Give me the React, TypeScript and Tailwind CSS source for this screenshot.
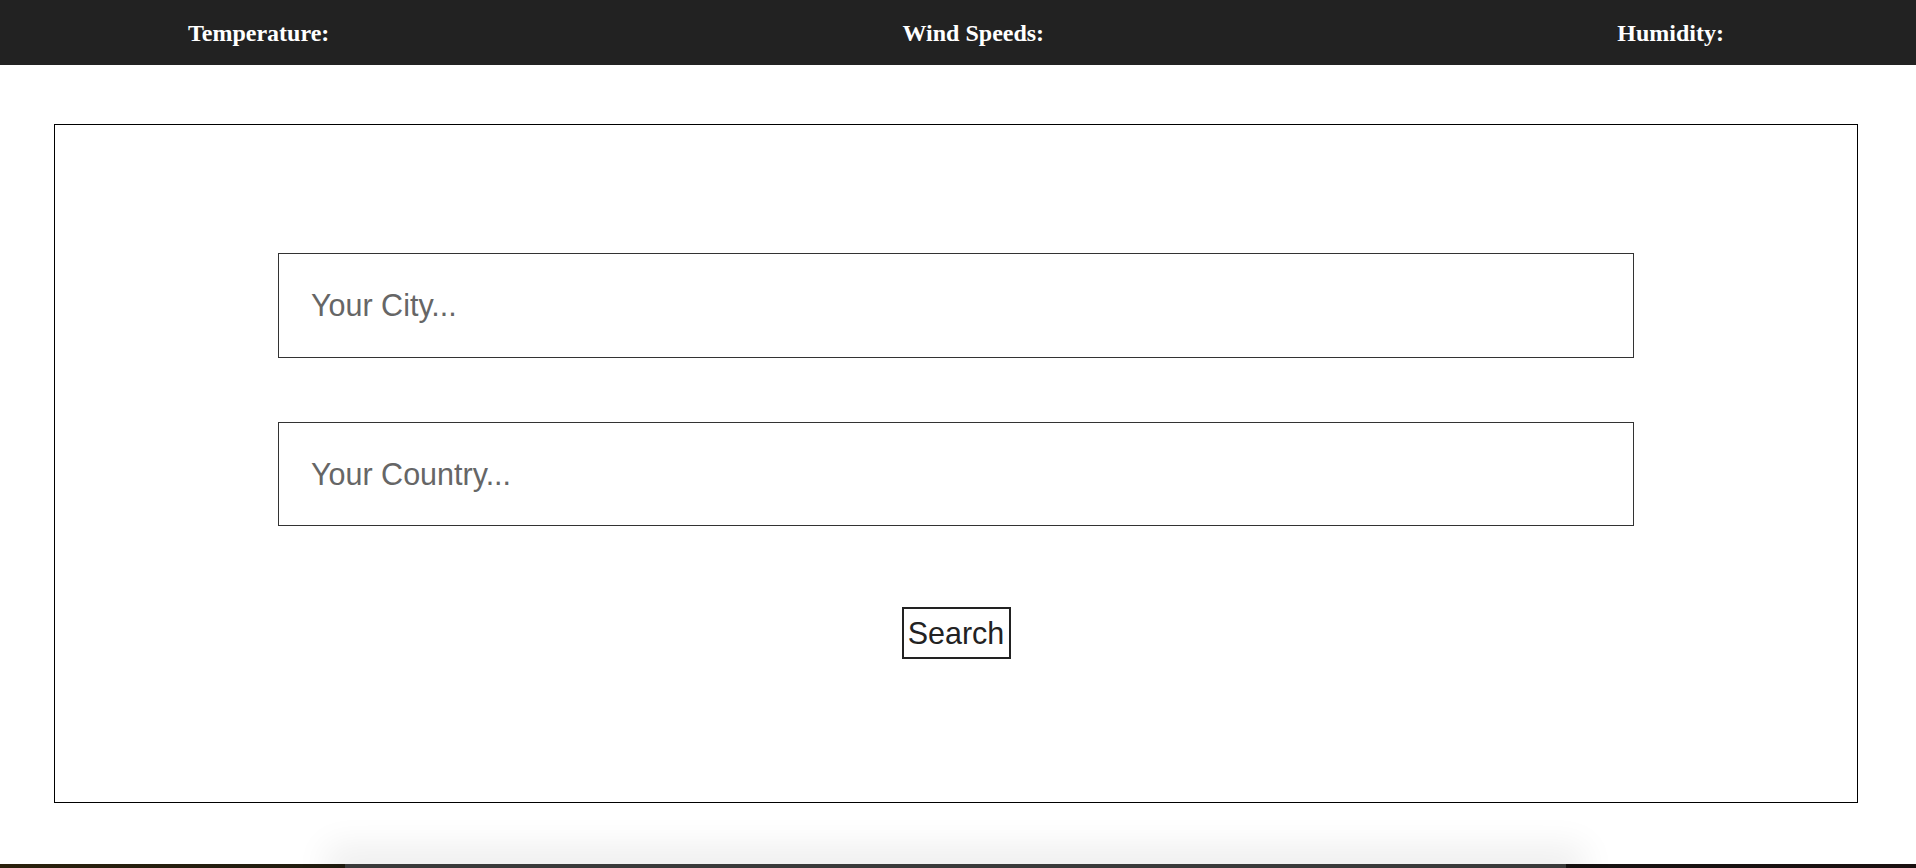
import React from "react";

export default function App() {
  return (
    <div className="relative w-[1916px] h-[868px] overflow-hidden bg-white">
      <header className="h-[65px] bg-[#222222] flex items-center justify-between pl-[188px] pr-[192px] font-['Liberation_Serif',serif] font-bold text-[24px] text-white leading-normal">
        <span>Temperature:</span>
        <span>Wind Speeds:</span>
        <span>Humidity:</span>
      </header>

      <main className="mt-[59px] ml-[54px] w-[1804px] h-[679px] border border-black flex flex-col items-center pt-[128px] font-['Liberation_Sans',Arial,sans-serif]">
        <input
          type="text"
          placeholder="Your City..."
          className="w-[1356px] h-[105px] border border-[#333] pl-[32px] text-[30.5px] text-[#222] placeholder:text-[#666] outline-none"
        />
        <input
          type="text"
          placeholder="Your Country..."
          className="mt-[64px] w-[1356px] h-[104px] border border-[#333] pl-[32px] text-[30.5px] text-[#222] placeholder:text-[#666] outline-none"
        />
        <button className="mt-[81px] w-[109px] h-[52px] border-2 border-[#222] text-[30.5px] text-[#222] leading-none flex items-center justify-center">
          Search
        </button>
      </main>

      <div className="absolute left-0 right-0 bottom-0 h-[4px] bg-gradient-to-r from-[#2a200c] via-[#0e1412] to-[#1a1010]" />
      <div className="absolute left-[345px] w-[1221px] bottom-0 h-[4px] bg-[#3a3a3a] shadow-[0_0_34px_18px_rgba(0,0,0,0.07)]" />
    </div>
  );
}
